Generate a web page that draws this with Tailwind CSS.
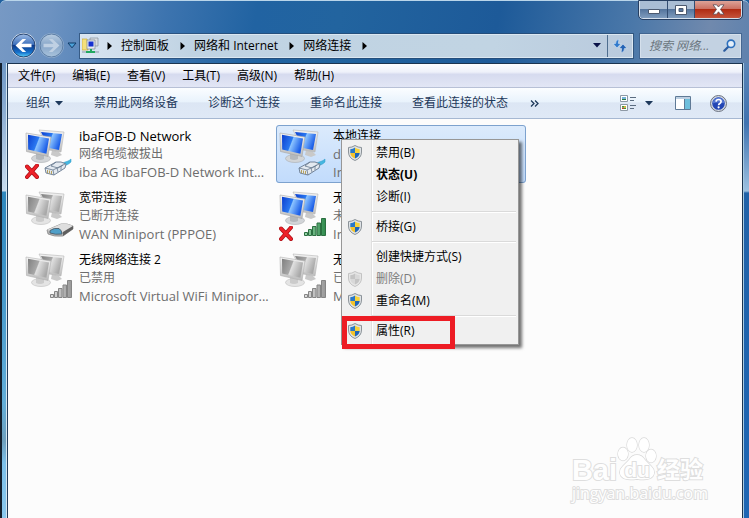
<!DOCTYPE html>
<html lang="zh-CN">
<head>
<meta charset="utf-8">
<title>网络连接</title>
<script src="https://cdn.jsdelivr.net/npm/@tailwindcss/browser@4"></script>
</head>
<body class="flex min-h-screen flex-col overflow-hidden bg-[#20609f] font-['Open_Sans','Noto_Sans_CJK_SC',sans-serif] text-[12px] leading-[18px] text-black">

<svg class="absolute size-0" aria-hidden="true">
  <defs>
    <linearGradient id="blue" x1="0" y1="0" x2="1" y2="0.35"><stop offset="0" stop-color="#0b3fd0"/><stop offset=".5" stop-color="#2a78f0"/><stop offset=".55" stop-color="#8cc4ff"/><stop offset="1" stop-color="#1c5fe8"/></linearGradient>
    <linearGradient id="grey" x1="0" y1="0" x2="1" y2="0.35"><stop offset="0" stop-color="#808080"/><stop offset=".5" stop-color="#a8a8a8"/><stop offset=".55" stop-color="#e0e0e0"/><stop offset="1" stop-color="#a9a9a9"/></linearGradient>
    <linearGradient id="case" x1="0" y1="0" x2="0" y2="1"><stop offset="0" stop-color="#f4f4f4"/><stop offset="1" stop-color="#bcbcbc"/></linearGradient>
    <linearGradient id="greenBar" x1="0" y1="0" x2="1" y2="0"><stop offset="0" stop-color="#9ad6ab"/><stop offset="1" stop-color="#2f8a4c"/></linearGradient>
    <linearGradient id="greyBar" x1="0" y1="0" x2="1" y2="0"><stop offset="0" stop-color="#e2e2e2"/><stop offset="1" stop-color="#989898"/></linearGradient>
    <linearGradient id="orb" x1="0" y1="0" x2="0" y2="1"><stop offset="0" stop-color="#9dbbe4"/><stop offset=".45" stop-color="#3f72bd"/><stop offset=".5" stop-color="#0c3a8c"/><stop offset=".8" stop-color="#1672cc"/><stop offset="1" stop-color="#5cd4fb"/></linearGradient>
    <linearGradient id="orbOff" x1="0" y1="0" x2="0" y2="1"><stop offset="0" stop-color="#b9cde2"/><stop offset=".5" stop-color="#86a5c8"/><stop offset="1" stop-color="#a9c3dc"/></linearGradient>

    <symbol id="stand" viewBox="0 0 52 54">
      <path d="M29 23l7 2 3 3-5 2-6-2z" fill="#c9c9c9"/>
      <path d="M16 3l25 2-3 20-12-2z" fill="url(#case)" stroke="#b5b5b5" stroke-width=".6"/>
    </symbol>
    <symbol id="pcOn" viewBox="0 0 52 54">
      <use href="#stand"/>
      <path d="M18 5l21 2-3 16-10-2z" fill="url(#blue)"/>
      <ellipse cx="18" cy="31.500" rx="9.500" ry="4" fill="#d2d5d8" stroke="#a9adb0" stroke-width=".6"/>
      <path d="M13 26l8 2v4q-4 2-8 0z" fill="#b4b8bc"/>
      <path d="M3 6l25 4-3 19.500-21.500-5z" fill="url(#case)" stroke="#a5a5a5" stroke-width=".6"/>
      <path d="M5 7.800l21 3.600-2.600 15.400L5.200 22.500z" fill="url(#blue)"/>
    </symbol>
    <symbol id="pcOff" viewBox="0 0 52 54">
      <use href="#stand"/>
      <path d="M18 5l21 2-3 16-10-2z" fill="url(#grey)"/>
      <ellipse cx="18" cy="31.500" rx="9.500" ry="4" fill="#e4e4e4" stroke="#bdbdbd" stroke-width=".6"/>
      <path d="M13 26l8 2v4q-4 2-8 0z" fill="#cbcbcb"/>
      <path d="M3 6l25 4-3 19.500-21.500-5z" fill="url(#case)" stroke="#b0b0b0" stroke-width=".6"/>
      <path d="M5 7.800l21 3.600-2.600 15.400L5.200 22.500z" fill="url(#grey)"/>
    </symbol>
    <symbol id="plug" viewBox="0 0 52 54">
      <path d="M40 36c3-2 5-1 8-4v3c-3 3-5 3-7 4z" fill="#45b7e0" stroke="#2a9bc8" stroke-width=".5"/>
      <path d="M22 41l11-6 5 0 5 2-1 4-11 7-8-2z" fill="#e3e9f0" stroke="#66788e" stroke-width=".9"/>
      <path d="M22 41l8 2 1 5M30 43l12-6M33 35l-5 4 7 2 5-3M34 41l1 4M38 39l0 4" fill="none" stroke="#66788e" stroke-width=".8"/>
      <path d="M24.500 43v3M26.500 43.500v3M28.500 44v3" stroke="#b09a50" stroke-width=".9"/>
    </symbol>
    <symbol id="modem" viewBox="0 0 52 54">
      <path d="M24 41l14-6q6-1 12 2v3l-10 7q-9 1-15-2z" fill="#b7b7b7" stroke="#7d7d7d" stroke-width=".7"/>
      <path d="M24 41l14-6q6-1 12 2l-10 6q-8 1-16-2z" fill="#dedede"/>
      <path d="M27 41.500q4-3 9-2 3 2 3 5.500-7 1-12-1z" fill="#4f9fc8" stroke="#46545e" stroke-width=".8"/>
      <path d="M40 43l10-6v3l-10 7z" fill="#5e5e5e"/>
    </symbol>
    <symbol id="bars" viewBox="0 0 22 18">
      <path d="M.5 14.500h3v3h-3zM4.500 11.500h3v6h-3zM8.500 8.500h3.500v9H8.500zM13 5h3.500v12.500H13zM17.500.5h4v17h-4z" stroke-width="1"/>
    </symbol>
    <symbol id="cross" viewBox="0 0 14 15">
      <path d="M2 2.500l10 10.500M12 1.500L2 13" stroke="#a90f16" stroke-width="4" stroke-linecap="round"/>
      <path d="M2 2.500l10 10.500M12 1.500L2 13" stroke="#ee2229" stroke-width="2.600" stroke-linecap="round"/>
    </symbol>
    <symbol id="shield" viewBox="0 0 14 16">
      <path d="M7 .5Q10 2.500 13.500 2.500V7q0 6-6.500 8.500Q.5 13 .5 7V2.500Q4 2.500 7 .5z" fill="#dfe3e6" stroke="#8b9298"/>
      <path d="M7 2.500V8H2.300V4.200Q5 4 7 2.500z" fill="#2878c8"/>
      <path d="M7 2.500Q9 4 11.700 4.200V8H7z" fill="#f7d33c"/>
      <path d="M2.300 8H7v5.600Q2.600 11.500 2.300 8z" fill="#f3c32c"/>
      <path d="M7 8h4.700Q11.400 11.500 7 13.600z" fill="#1f66b8"/>
    </symbol>
    <symbol id="shieldOff" viewBox="0 0 14 16">
      <path d="M7 .5Q10 2.500 13.500 2.500V7q0 6-6.500 8.500Q.5 13 .5 7V2.500Q4 2.500 7 .5z" fill="#e6e6e6" stroke="#c3c3c3"/>
      <path d="M7 2.500V8H2.300V4.200Q5 4 7 2.500zM7 8h4.700Q11.400 11.500 7 13.600z" fill="#c4c4c4"/>
      <path d="M7 2.500Q9 4 11.700 4.200V8H7zM2.300 8H7v5.600Q2.600 11.500 2.300 8z" fill="#d8d8d8"/>
    </symbol>
    <symbol id="down" viewBox="0 0 8 5"><path d="M0 0h8L4 4.500z" fill="currentColor"/></symbol>
    <symbol id="right" viewBox="0 0 5 8"><path d="M.5 0v8L5 4z" fill="currentColor"/></symbol>
  </defs>
</svg>

<header class="relative flex h-[63px] shrink-0 flex-col justify-end rounded-t-md border-t border-[#b9d5ea] bg-[linear-gradient(100deg,#7799c4_0%,#6c92c1_7%,#3d74af_22%,#2163a2_34%,#22649f_45%,#1d5a99_66%,#4b78a9_84%,#7089ad_94%,#5f82ae_100%)] pb-[5px] pl-[10px] pr-[8px]">
  <div class="absolute right-[7px] top-0 flex h-[18px] overflow-hidden rounded-b border border-t-0 border-[#d4dfec] outline outline-[#263f62]">
    <button aria-label="最小化" class="flex w-[28px] items-center justify-center border-r border-[#324d72] bg-[linear-gradient(#a9bdd4_0_45%,#55759d_50%,#7e9bbd)]">
      <svg class="mt-1 h-[5px] w-[12px]" viewBox="0 0 12 5"><path d="M.5.5h11v4H.5z" fill="#fff" stroke="#4c5a70"/></svg>
    </button>
    <button aria-label="最大化" class="flex w-[27px] items-center justify-center border-r border-[#324d72] bg-[linear-gradient(#a9bdd4_0_45%,#55759d_50%,#7e9bbd)]">
      <svg class="h-[10px] w-[12px]" viewBox="0 0 12 10"><path d="M.5.5h11v9H.5zM4 3.500v3h4v-3z" fill="#fff" fill-rule="evenodd" stroke="#4c5a70"/></svg>
    </button>
    <button aria-label="关闭" class="flex w-[46px] items-center justify-center bg-[linear-gradient(#dda398_0%,#cc7263_45%,#b02c14_50%,#c5533b_100%)]">
      <svg class="h-[11px] w-[13px]" viewBox="0 0 13 11"><path d="M1 .8h3.600L6.500 3 8.400.8H12L8.500 5.400 12 10.200H8.400L6.500 7.800l-1.900 2.400H1l3.500-4.800z" fill="#fff" stroke="#594852" stroke-width=".8"/></svg>
    </button>
  </div>

  <div class="flex h-[25px] items-center">
    <div class="flex items-center gap-[1px]">
      <button aria-label="后退"><svg class="block size-[27px]" viewBox="0 0 27 27"><circle cx="13.500" cy="13.500" r="12.500" fill="#d5e0ee"/><circle cx="13.500" cy="13.500" r="11.500" fill="url(#orb)" stroke="#26436f"/><path d="M5.500 13.500l7-6.500h3.600l-4.600 4.700h10v3.600h-10l4.600 4.700h-3.600z" fill="#fff"/></svg></button>
      <button aria-label="前进"><svg class="block size-[27px]" viewBox="0 0 27 27"><circle cx="13.500" cy="13.500" r="12.500" fill="#92afd0"/><circle cx="13.500" cy="13.500" r="11.500" fill="url(#orbOff)" stroke="#5b7da5"/><path d="M21.500 13.500l-7-6.500h-3.600l4.600 4.700h-10v3.600h10l-4.600 4.700h3.600z" fill="#bfd0e3"/></svg></button>
      <button aria-label="最近的页面" class="ml-[1px]"><svg class="block h-[7px] w-[10px]" viewBox="0 0 10 7"><path d="M1 1h8L5 5.800z" fill="#4da3da" stroke="#103a66"/></svg></button>
    </div>

    <nav aria-label="地址" class="ml-[3px] flex h-[24px] min-w-0 flex-1 items-center border border-[#dbe7f1] bg-[linear-gradient(90deg,#d8e4f1,#c0d3e3_20%,#c1d4e3_75%,#b9cadd)] outline outline-[#27476e]/70">
      <svg class="ml-[1px] size-[17px] shrink-0" viewBox="0 0 17 17"><path d="M0 2h5l1 11H0z" fill="#f4e07a" stroke="#c8a93a" stroke-width=".7"/><path d="M8 1h8v8H8z" fill="#d9dde2" stroke="#85909c" stroke-width=".7"/><path d="M5 3h8v9H5z" fill="#e8ebef" stroke="#7d8792" stroke-width=".7"/><path d="M6.500 4.500h5v5h-5z" fill="#1530d0"/><path d="M8 12h2v2h3v2H4v-2h4z" fill="#22a860"/><path d="M0 15h4M13 15h4" stroke="#8b99a6"/></svg>
      <svg class="ml-[8px] h-[8px] w-[5px] shrink-0"><use href="#right"/></svg>
      <a href="#" class="ml-[9px] whitespace-nowrap">控制面板</a>
      <svg class="ml-[11px] h-[8px] w-[5px] shrink-0"><use href="#right"/></svg>
      <a href="#" class="ml-[9px] whitespace-nowrap">网络和 Internet</a>
      <svg class="ml-[11px] h-[8px] w-[5px] shrink-0"><use href="#right"/></svg>
      <a href="#" class="ml-[9px] whitespace-nowrap">网络连接</a>
      <svg class="ml-[11px] h-[8px] w-[5px] shrink-0"><use href="#right"/></svg>
      <button aria-label="历史地址" class="ml-auto px-[6px] text-[#0a1248]"><svg class="block h-[5px] w-[8px]"><use href="#down"/></svg></button>
      <button aria-label="刷新" class="flex h-full w-[25px] items-center justify-center border-l border-[#4f6e8f]">
        <svg class="size-[16px]" viewBox="0 0 16 16"><path d="M7 1.500Q3.600 1.500 3.600 5.500H1l4 4.500 4-4.500H6.400q0-2 .6-4z" fill="#2f79cc" stroke="#e6f0fa" stroke-width=".5"/><path d="M9 14.500q3.400 0 3.400-4H15L11 6 7 10.500h2.600q0 2-.6 4z" fill="#2362b4" stroke="#e6f0fa" stroke-width=".5"/></svg>
      </button>
    </nav>

    <label class="ml-[7px] flex h-[24px] w-[101px] items-center border border-[#d5e0ec] bg-[#c3d2e2] pl-[8px] pr-[4px] outline outline-[#3b5c86]/70">
      <input type="text" aria-label="搜索" placeholder="搜索 网络..." class="min-w-0 flex-1 bg-transparent italic outline-none placeholder:text-[#6c7780]">
      <svg class="size-[13px] shrink-0" viewBox="0 0 13 13" fill="none"><path d="M5.800 7.200L1.300 11.700" stroke="#2c5c9e" stroke-width="2.200" stroke-linecap="round"/><circle cx="8" cy="4.800" r="3.700" fill="#e4effa" stroke="#2d70bd" stroke-width="1.600"/></svg>
    </label>
  </div>
</header>

<div class="flex flex-1">
  <div class="flex w-[8px] shrink-0 border-l-2 border-r border-l-[#14202e] border-r-[#1f3a58] bg-[linear-gradient(#6f98c6_0px,#86a9d0_40px,#c7dbee_128px,#2f87bd_129px,#3d93c8_200px,#62aed9_340px,#6fa0be_378px,#7cc0ea_400px,#8ac8ee_100%)]">
    <div class="ml-auto w-px bg-[#d3e6f2]"></div>
  </div>

  <div class="flex min-w-0 flex-1 flex-col border-t border-[#1b3450] bg-[#fcfcfc]">
    <nav aria-label="菜单栏" class="flex h-[24px] items-center gap-[17px] border-b border-[#b7c0d6] bg-[linear-gradient(#fdfdff_0%,#eef1fa_35%,#d6dbef_45%,#e2e6f5_100%)] pl-[10px] pt-px">
      <button>文件(F)</button>
      <button>编辑(E)</button>
      <button>查看(V)</button>
      <button>工具(T)</button>
      <button>高级(N)</button>
      <button>帮助(H)</button>
    </nav>

    <div role="toolbar" aria-label="命令" class="flex h-[31px] items-center border-b border-[#a6b8d2] bg-[linear-gradient(#fbfdff_0%,#e9f3fc_45%,#dce6f4_50%,#dfe9f6_100%)] pl-[18px] pr-[15px] text-[#1e395b]">
      <button class="flex items-center gap-[5px]">组织 <svg class="h-[5px] w-[8px]"><use href="#down"/></svg></button>
      <div class="ml-[31px] flex gap-[30px] whitespace-nowrap">
        <button>禁用此网络设备</button>
        <button>诊断这个连接</button>
        <button>重命名此连接</button>
        <button>查看此连接的状态</button>
      </div>
      <button aria-label="更多命令" class="ml-[22px]"><svg class="h-[7px] w-[9px]" viewBox="0 0 9 7" fill="none" stroke="currentColor" stroke-width="1.300"><path d="M1 .5l3 3-3 3M5 .5l3 3-3 3"/></svg></button>
      <button aria-label="更改视图" class="ml-auto"><svg class="size-[16px]" viewBox="0 0 16 16"><path d="M.5.5h7v6h-7zM.5 9.500h7v6h-7z" fill="#fff" stroke="#8d99a5"/><path d="M2 2h4v3H2z" fill="#74b2d8"/><path d="M2 4h4v1H2z" fill="#2a7c46"/><path d="M2 11h2v1.500H2zM4 12.500h2V14H4z" fill="#3b9c3e"/><path d="M4 11h2v1.500H4z" fill="#e0b12c"/><path d="M2 12.500h2V14H2z" fill="#b64a2a"/><path d="M10 2.500h6M10 5.500h4M10 10.500h6M10 13.500h4" stroke="#5b6c80"/></svg></button>
      <button aria-label="视图选项" class="ml-[9px]"><svg class="h-[5px] w-[8px]"><use href="#down"/></svg></button>
      <button aria-label="预览窗格" class="ml-[22px]"><svg class="h-[14px] w-[16px]" viewBox="0 0 16 14"><path d="M.5.5h15v13H.5z" fill="#fff" stroke="#5f7a96"/><path d="M1 1h14v2H1z" fill="#bdd0e2"/><path d="M10 3h5v10h-5z" fill="#6fbfdc"/><path d="M9.500 3v10" stroke="#5f7a96"/></svg></button>
      <button aria-label="帮助" class="ml-[19px]"><svg class="size-[17px]" viewBox="0 0 17 17"><circle cx="8.500" cy="8.500" r="8" fill="#d3d9e2" stroke="#6b7280"/><circle cx="8.500" cy="8.500" r="6.300" fill="#2346b4"/><path d="M2.500 8.500a6 6 0 0 1 12 0q-6-2-12 0z" fill="#5577d2"/><path d="M6 6.700q.2-2.200 2.600-2.200t2.500 2q0 1.200-1.300 2-1.200.7-1.200 1.700" fill="none" stroke="#fff" stroke-width="1.700"/><circle cx="8.600" cy="12.300" r="1.100" fill="#fff"/></svg></button>
    </div>

    <main class="relative flex-1 px-[14px] pt-[6px]">
      <ul class="grid auto-rows-[58px] grid-cols-[250px_250px] gap-[4px]">
        <li class="flex items-start gap-[4px] px-[1px]">
          <svg class="h-[56px] w-[52px] shrink-0 pt-[2px]" viewBox="0 0 52 54"><use href="#pcOn"/><use href="#plug"/><use href="#cross" x="2" y="37" width="14" height="15"/></svg>
          <div class="min-w-0 pt-[2px] text-[#6d6d6d]">
            <p class="text-[13px] text-black">ibaFOB-D Network</p><p>网络电缆被拔出</p><p class="whitespace-nowrap text-[13px]">iba AG ibaFOB-D Network Int...</p>
          </div>
        </li>
        <li class="relative flex items-start gap-[4px] rounded-[3px] bg-[linear-gradient(#dcebfc,#c1dbfc)] px-[1px] outline -outline-offset-1 outline-[#7da2ce]">
          <svg class="h-[56px] w-[52px] shrink-0 pt-[2px]" viewBox="0 0 52 54"><use href="#pcOn"/><use href="#plug"/></svg>
          <div class="min-w-0 pt-[2px] text-[#6d6d6d]">
            <p class="text-black">本地连接</p><p class="text-[13px]">d</p><p class="text-[13px]">In</p>
          </div>

          <div role="menu" aria-label="连接操作" class="absolute left-[65px] top-[14px] z-10 flex w-[178px] flex-col border border-[#979797] bg-[linear-gradient(90deg,#f0f0f0_29px,#e0e0e0_29px_30px,#fff_30px_31px,#f0f0f0_31px)] py-[2px] text-black shadow-[3px_3px_3px_rgba(0,0,0,0.55)]">
            <button role="menuitem" class="flex h-[22px] items-center gap-[14px] pl-[6px]"><svg class="h-[16px] w-[14px]"><use href="#shield"/></svg>禁用(B)</button>
            <button role="menuitem" class="flex h-[22px] items-center pl-[34px] font-bold">状态(U)</button>
            <button role="menuitem" class="flex h-[22px] items-center pl-[34px]">诊断(I)</button>
            <hr class="my-[3px] ml-[30px] mr-[2px] h-[2px] border-b border-t border-b-white border-t-[#dadada]">
            <button role="menuitem" class="flex h-[22px] items-center gap-[14px] pl-[6px]"><svg class="h-[16px] w-[14px]"><use href="#shield"/></svg>桥接(G)</button>
            <hr class="my-[3px] ml-[30px] mr-[2px] h-[2px] border-b border-t border-b-white border-t-[#dadada]">
            <button role="menuitem" class="flex h-[22px] items-center pl-[34px]">创建快捷方式(S)</button>
            <button role="menuitem" disabled class="flex h-[22px] items-center gap-[14px] pl-[6px] text-[#7c7c7c]"><svg class="h-[16px] w-[14px]"><use href="#shieldOff"/></svg>删除(D)</button>
            <button role="menuitem" class="flex h-[22px] items-center gap-[14px] pl-[6px]"><svg class="h-[16px] w-[14px]"><use href="#shield"/></svg>重命名(M)</button>
            <hr class="my-[3px] ml-[30px] mr-[2px] h-[2px] border-b border-t border-b-white border-t-[#dadada]">
            <button role="menuitem" class="flex h-[22px] items-center gap-[14px] pl-[6px]"><svg class="h-[16px] w-[14px]"><use href="#shield"/></svg>属性(R)</button>
            <div class="pointer-events-none absolute -bottom-[5px] left-0 h-[33px] w-[113px] border-[5px] border-[#ed1c24]"></div>
          </div>
        </li>
        <li class="flex items-start gap-[4px] px-[1px]">
          <svg class="h-[56px] w-[52px] shrink-0 pt-[2px]" viewBox="0 0 52 54"><use href="#pcOff"/><use href="#modem"/></svg>
          <div class="min-w-0 pt-[2px] text-[#6d6d6d]">
            <p class="text-black">宽带连接</p><p>已断开连接</p><p class="whitespace-nowrap text-[13px]">WAN Miniport (PPPOE)</p>
          </div>
        </li>
        <li class="flex items-start gap-[4px] px-[1px]">
          <svg class="h-[56px] w-[52px] shrink-0 pt-[2px]" viewBox="0 0 52 54"><use href="#pcOn"/><use href="#bars" x="27" y="29" width="22" height="18" fill="url(#greenBar)" stroke="#2b6f40"/><use href="#cross" x="2" y="37" width="14" height="15"/></svg>
          <div class="whitespace-nowrap pt-[2px] text-[#6d6d6d]">
            <p class="text-black">无</p><p>未</p><p class="text-[13px]">In</p>
          </div>
        </li>
        <li class="flex items-start gap-[4px] px-[1px]">
          <svg class="h-[56px] w-[52px] shrink-0 pt-[2px]" viewBox="0 0 52 54"><use href="#pcOff"/><use href="#bars" x="27" y="29" width="22" height="18" fill="url(#greyBar)" stroke="#858585"/></svg>
          <div class="min-w-0 pt-[2px] text-[#6d6d6d]">
            <p class="text-black">无线网络连接 2</p><p>已禁用</p><p class="whitespace-nowrap text-[13px]">Microsoft Virtual WiFi Minipor...</p>
          </div>
        </li>
        <li class="flex items-start gap-[4px] px-[1px]">
          <svg class="h-[56px] w-[52px] shrink-0 pt-[2px]" viewBox="0 0 52 54"><use href="#pcOff"/><use href="#bars" x="27" y="29" width="22" height="18" fill="url(#greyBar)" stroke="#858585"/></svg>
          <div class="whitespace-nowrap pt-[2px] text-[#6d6d6d]">
            <p class="text-black">无</p><p>已</p><p class="text-[13px]">M</p>
          </div>
        </li>
      </ul>

      <div class="absolute bottom-[15px] right-[34px] flex flex-col items-start text-[#fefefe] [-webkit-text-stroke:2px_#dedede] [paint-order:stroke_fill]">
        <div class="flex items-end font-['Liberation_Sans','Noto_Sans_CJK_SC',sans-serif] font-bold leading-[26px]">
          <span class="text-[29px]">Bai</span>
          <span class="relative flex h-[46px] w-[40px] items-end justify-center">
            <svg class="absolute bottom-[2px] left-0 h-[44px] w-[40px]" viewBox="0 0 40 44" fill="#fff" stroke="#d8d8d8" stroke-width="1.300"><ellipse cx="15" cy="8" rx="5" ry="7"/><ellipse cx="27" cy="8" rx="5" ry="7"/><ellipse cx="6" cy="17" rx="5" ry="6.500"/><ellipse cx="34" cy="19" rx="5" ry="6.500"/><path d="M20 18q5 0 8 5l6 6q5 5 2 10-4 5-16 3-12 2-16-3-3-5 2-10l6-6q3-5 8-5z"/></svg>
            <span class="relative text-[21px]">du</span>
          </span>
          <span class="text-[23px]">经验</span>
        </div>
        <span class="text-[16px] leading-[20px]">jingyan.baidu.com</span>
      </div>
    </main>
  </div>

  <div class="w-[7px] shrink-0 border-l border-[#1b3450] bg-[linear-gradient(#5a84b5_0px,#3f73b0_60px,#9cc0e0_128px,#2162a8_130px,#1e66b4_100%)]">
    <div class="h-full w-px bg-[#a9cbe2]"></div>
  </div>
</div>
</body>
</html>
